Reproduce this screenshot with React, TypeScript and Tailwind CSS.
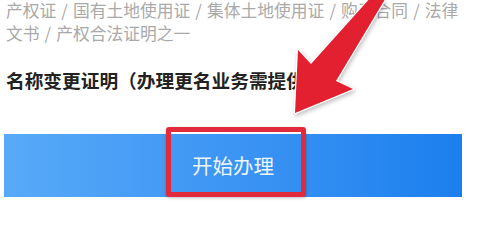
import React from "react";

function Sep() {
  return <span className="inline-block w-[16.75px] text-center">/</span>;
}

export default function App() {
  return (
    <div className="relative h-[214px] w-[485px] overflow-hidden bg-white font-['Noto_Sans_CJK_SC',sans-serif]">
      <div className="pl-[6px] text-[16.75px] text-[#a9a9a9]">
        <div className="whitespace-nowrap leading-[20px]">
          产权证<Sep />国有土地使用证<Sep />集体土地使用证<Sep />购买合同<Sep />法律
        </div>
        <div className="whitespace-nowrap leading-[26px]">
          文书<Sep />产权合法证明之一
        </div>
      </div>
      <div className="mt-[21px] whitespace-nowrap pl-[6px] text-[18.7px] font-bold leading-[26px] text-[#222222]">
        名称变更证明（办理更名业务需提供
      </div>
      <div className="relative ml-[4px] mt-[41px] flex h-[63px] w-[458px] items-center justify-center bg-gradient-to-r from-[#58aaf8] to-[#1a7fee]">
        <span className="text-[20.5px] leading-none text-[#eef5fd]">开始办理</span>
        <div className="absolute left-[162px] top-[-7px] h-[70px] w-[140px] rounded-[3px] border-[5px] border-[#e12a3b] shadow-[0_1px_3px_rgba(0,0,0,0.25)]" />
      </div>
      <svg
        className="absolute left-0 top-0 drop-shadow-[1px_2px_2px_rgba(0,0,0,0.25)]"
        width="485"
        height="214"
        viewBox="0 0 485 214"
      >
        <polygon
          points="372,-4 311,64 298,50 295,113 353,89 336,81 387,-4"
          fill="#e3202f"
          stroke="#ffffff"
          strokeWidth="2.5"
          strokeLinejoin="round"
          paintOrder="stroke"
        />
      </svg>
    </div>
  );
}
